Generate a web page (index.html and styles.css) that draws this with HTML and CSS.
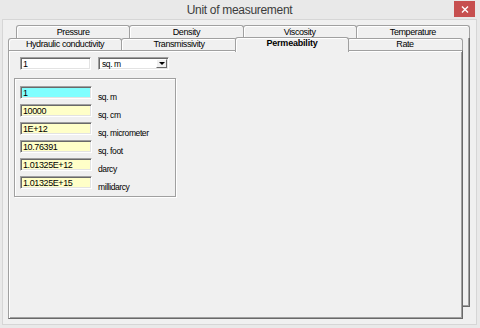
FILE: index.html
```html
<!DOCTYPE html>
<html>
<head>
    <meta charset="UTF-8">
    <title>Unit of measurement</title>
    <link rel="stylesheet" href="styles.css">
</head>
<body>
    <div class="window">
        <div class="titlebar">
            <span></span>
            <span class="title">Unit of measurement</span>
            <button class="close" aria-label="Close">
                <svg width="8" height="7" viewBox="0 0 8 7">
                    <path d="M1 0.5 L7 6.5 M7 0.5 L1 6.5" stroke="#fff" stroke-width="1.4" fill="none"/>
                </svg>
            </button>
        </div>

        <div class="client">
            <div class="tabs">
                <div class="tab-row back">
                    <div class="tab">Pressure</div>
                    <div class="tab">Density</div>
                    <div class="tab">Viscosity</div>
                    <div class="tab">Temperature</div>
                </div>
                <div class="tab-row front">
                    <div class="tab">Hydraulic conductivity</div>
                    <div class="tab">Transmissivity</div>
                    <div class="tab active">Permeability</div>
                    <div class="tab">Rate</div>
                </div>

                <div class="panel">
                    <div class="input-row">
                        <input type="text" class="field" value="1">
                        <div class="select">
                            <span>sq. m</span>
                            <span class="drop"></span>
                        </div>
                    </div>

                    <div class="group">
                        <div class="unit-row">
                            <input type="text" class="field current" value="1">
                            <label>sq. m</label>
                        </div>
                        <div class="unit-row">
                            <input type="text" class="field value" value="10000">
                            <label>sq. cm</label>
                        </div>
                        <div class="unit-row">
                            <input type="text" class="field value" value="1E+12">
                            <label>sq. micrometer</label>
                        </div>
                        <div class="unit-row">
                            <input type="text" class="field value" value="10.76391">
                            <label>sq. foot</label>
                        </div>
                        <div class="unit-row">
                            <input type="text" class="field value" value="1.01325E+12">
                            <label>darcy</label>
                        </div>
                        <div class="unit-row">
                            <input type="text" class="field value" value="1.01325E+15">
                            <label>millidarcy</label>
                        </div>
                    </div>
                </div>
            </div>
        </div>
    </div>
</body>
</html>
```

FILE: styles.css
```css
body {
    margin: 0;
    font-family: "Liberation Sans", Arial, sans-serif;
    font-size: 9px;
    color: #000;
}
.window {
    width: 480px;
    height: 328px;
    box-sizing: border-box;
    padding: 0 3px 3px 2px;
    background-color: #e9e9e9;
    display: flex;
    flex-direction: column;
}
.titlebar {
    height: 19px;
    flex: none;
    display: grid;
    grid-template-columns: 1fr auto 1fr;
}
.title {
    align-self: center;
    font-size: 12px;
    letter-spacing: -0.3px;
    color: #3c3c3c;
}
.close {
    justify-self: end;
    align-self: start;
    margin: 1px 2px 0 0;
    width: 21px;
    height: 16px;
    padding: 0;
    border: none;
    background-color: #c75050;
    display: flex;
    align-items: center;
    justify-content: center;
}
.client {
    flex: 1;
    background-color: #f0f0f0;
    border: 1px solid #d6d6d6;
    padding: 5px 0 0 5px;
}
.tabs {
    position: relative;
    width: 462px;
}
/* edge of the tab page that sits behind the current row */
.tabs::before {
    content: "";
    position: absolute;
    left: 8px;
    top: 13px;
    right: 0;
    bottom: 12px;
    border-right: 1px solid #696969;
    border-bottom: 1px solid #696969;
    box-shadow: inset -1px -1px 0 #a0a0a0;
}
.tab-row {
    display: flex;
}
.tab-row.back {
    margin-left: 8px;
    height: 13px;
}
.tab-row.front {
    width: 455px;
    height: 12px;
}
.tab {
    flex: 1;
    box-sizing: border-box;
    border: 1px solid #a0a0a0;
    border-bottom: none;
    border-radius: 3px 3px 0 0;
    box-shadow: inset 1px 1px 0 #fff;
    text-align: center;
    white-space: nowrap;
    letter-spacing: -0.4px;
    line-height: 12px;
}
.tab-row.front .tab {
    line-height: 11px;
}
.tab-row.front .tab:nth-child(1) {
    flex: none;
    width: 114px;
}
.tab-row.front .tab:nth-child(2) {
    flex: none;
    width: 116px;
}
.tab + .tab {
    margin-left: -1px;
}
.tab.active {
    flex: none;
    width: 114px;
    position: relative;
    z-index: 1;
    margin: -1px -1px -2px -2px;
    background-color: #f0f0f0;
    font-weight: bold;
    letter-spacing: -0.2px;
    line-height: 13px;
}
.panel {
    position: relative;
    width: 455px;
    height: 269px;
    box-sizing: border-box;
    border: 1px solid;
    border-color: #a0a0a0 #696969 #696969 #a0a0a0;
    box-shadow: inset 1px 1px 0 #fff, inset -1px -1px 0 #a0a0a0;
    background-color: #f0f0f0;
    padding: 6px 0 0 5px;
}
.input-row {
    display: flex;
    gap: 7px;
    margin-left: 6px;
}
.field,
.select {
    box-sizing: border-box;
    height: 13px;
    margin: 0;
    border: 1px solid;
    border-color: #a0a0a0 #fff #fff #a0a0a0;
    box-shadow: inset 1px 1px 0 #696969, inset -1px -1px 0 #e3e3e3;
    background-color: #fff;
}
.field {
    width: 72px;
    padding: 0 2px;
    font-family: "Liberation Sans", Arial, sans-serif;
    font-size: 9px;
    letter-spacing: -0.4px;
    color: #000;
    outline: none;
}
.input-row .field {
    width: 71px;
}
.field.current {
    background-color: #80ffff;
}
.field.value {
    background-color: #ffffc8;
}
.select {
    width: 71px;
    padding: 1px;
    display: flex;
    align-items: center;
    font-size: 8.5px;
    letter-spacing: -0.4px;
}
.select span:first-child {
    padding-left: 2px;
}
.drop {
    margin-left: auto;
    width: 11px;
    align-self: stretch;
    box-sizing: border-box;
    border: 1px solid;
    border-color: #fff #696969 #696969 #fff;
    background-color: #f0f0f0;
    display: flex;
    align-items: center;
    justify-content: center;
}
.drop::after {
    content: "";
    border-left: 3px solid transparent;
    border-right: 3px solid transparent;
    border-top: 3px solid #000;
}
.group {
    margin-top: 8px;
    width: 162px;
    height: 119px;
    box-sizing: border-box;
    border: 1px solid #a0a0a0;
    box-shadow: inset 1px 1px 0 #fff, 1px 1px 0 #fff;
    padding: 7px 0 0 5px;
}
.unit-row {
    display: flex;
    gap: 6px;
    height: 18px;
}
.unit-row label {
    padding-top: 5px;
    font-size: 8.5px;
    letter-spacing: -0.4px;
    line-height: 12px;
}
```
